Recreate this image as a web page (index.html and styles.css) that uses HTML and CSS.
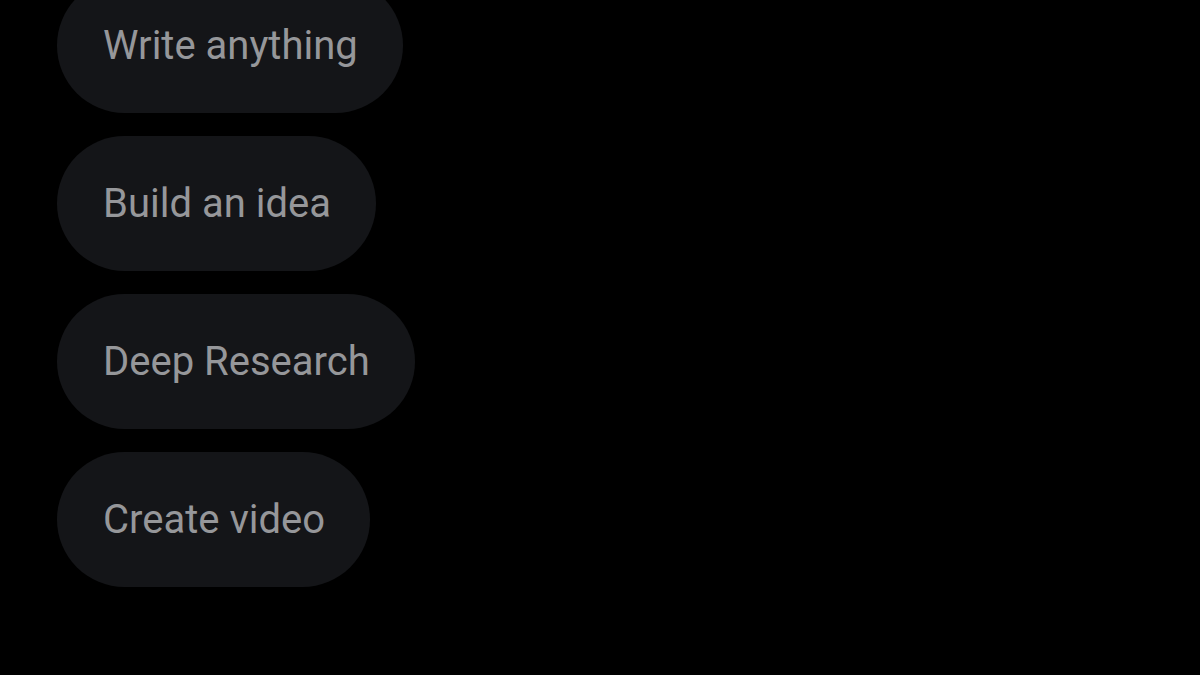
FILE: index.html
```html
<!DOCTYPE html>
<html>
<head>
<meta charset="utf-8">
<link rel="stylesheet" href="styles.css">
</head>
<body>
<div class="list">
  <div class="pill">Write anything</div>
  <div class="pill">Build an idea</div>
  <div class="pill">Deep Research</div>
  <div class="pill">Create video</div>
</div>
</body>
</html>
```
FILE: styles.css
```css
html, body {
  margin: 0;
  background: #000;
  height: 100%;
  overflow: hidden;
}
.list {
  display: flex;
  flex-direction: column;
  align-items: flex-start;
  gap: 23px;
  padding-left: 57px;
  margin-top: -22px;
}
.pill {
  height: 135px;
  display: flex;
  align-items: center;
  padding: 0 45px 0 46px;
  border-radius: 68px;
  background: #141518;
  color: #96979a;
  font-family: Roboto, "Noto Sans", sans-serif;
  font-size: 40px;
}
```
